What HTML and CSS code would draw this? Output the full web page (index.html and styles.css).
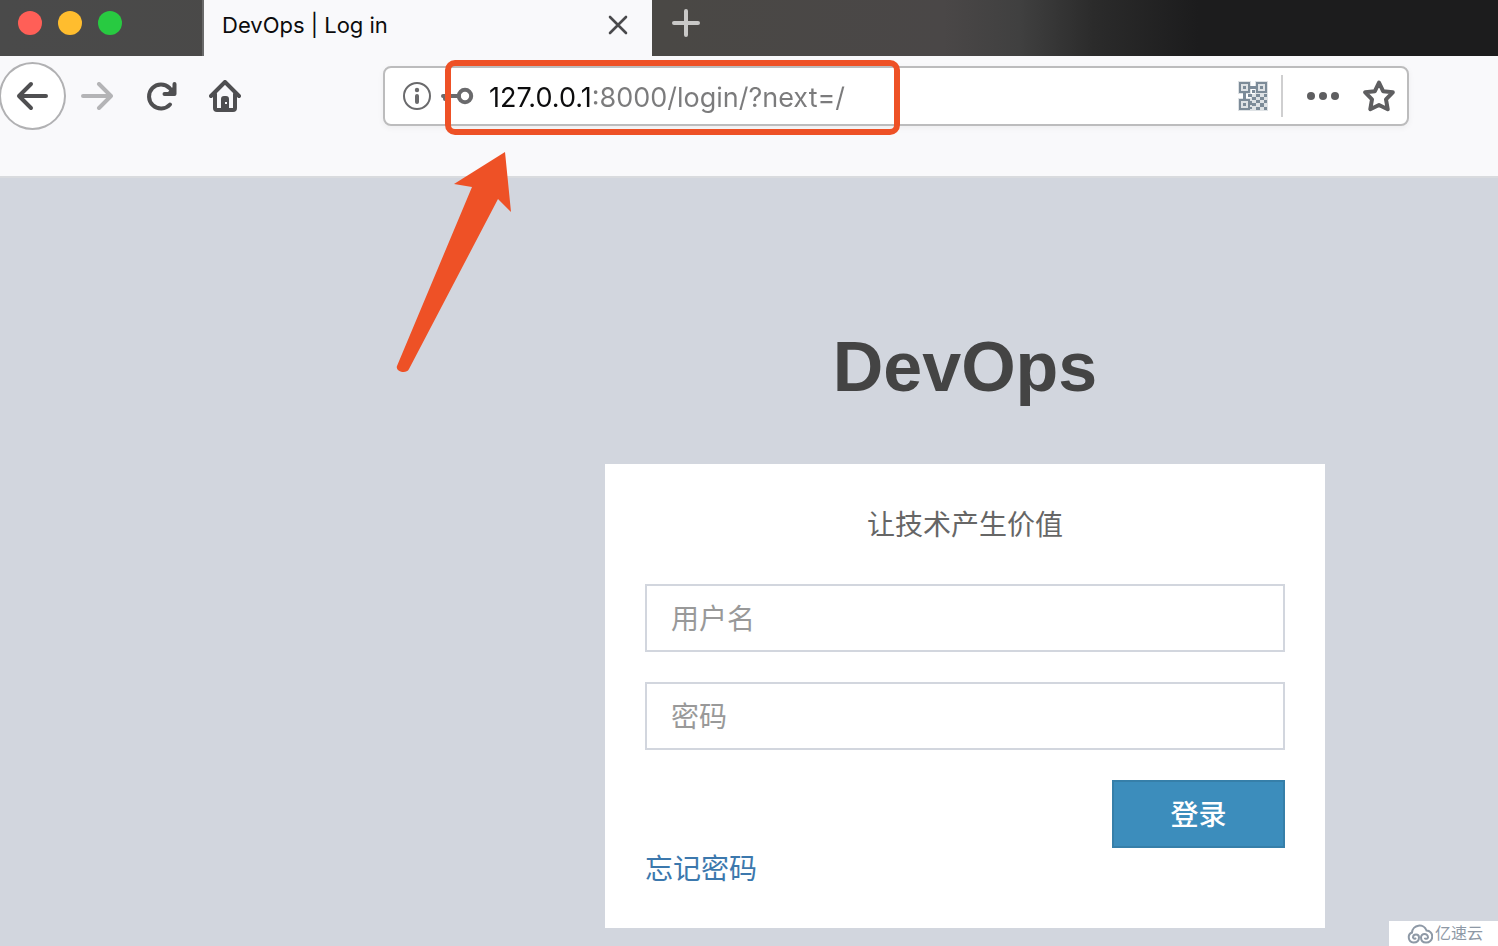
FILE: index.html
```html
<!DOCTYPE html>
<html lang="zh-CN">
<head>
<meta charset="utf-8">
<title>DevOps | Log in</title>
<link rel="stylesheet" href="styles.css">
</head>
<body>
<header class="browser">
  <div class="tabs">
    <div class="lights"><span class="light close"></span><span class="light min"></span><span class="light max"></span></div>
    <div class="tab">
      <span class="tab-title">DevOps | Log in</span>
      <button class="icon-btn" aria-label="Close tab"><svg width="22" height="22" viewBox="0 0 22 22"><path d="M3 3L19 19M19 3L3 19" stroke="#4a4a4c" stroke-width="2.6" stroke-linecap="round"/></svg></button>
    </div>
    <button class="icon-btn new-tab" aria-label="New tab"><svg width="28" height="28" viewBox="0 0 28 28"><path d="M14 2V26M2 14H26" stroke="#c9c8c7" stroke-width="4" stroke-linecap="round"/></svg></button>
  </div>
  <div class="toolbar">
    <nav class="nav">
      <button class="nav-btn back" aria-label="Back"><svg width="32" height="32" viewBox="0 0 32 32"><path d="M15 4L3 16L15 28M3 16H30" class="stroke"/></svg></button>
      <button class="nav-btn" aria-label="Forward"><svg class="faded" width="32" height="32" viewBox="0 0 32 32"><path d="M18 4L30 16L18 28M30 16H2" class="stroke"/></svg></button>
      <button class="nav-btn" aria-label="Reload"><svg width="32" height="32" viewBox="0 0 32 32"><path d="M25 24.500A12 12 0 1 1 24.500 8L28 12" class="stroke"/><path d="M29.500 4V14H19.500" class="stroke"/><path d="M21 14L30 5V14Z" fill="#4f4f51"/></svg></button>
      <button class="nav-btn" aria-label="Home"><svg width="32" height="32" viewBox="0 0 32 32"><path d="M2 16L16 2L30 16" class="stroke"/><path d="M6 14V28Q6 30 8 30H24Q26 30 26 28V14" class="stroke"/><path fill="#4f4f51" fill-rule="evenodd" d="M12 30V19Q12 16 15 16H17Q20 16 20 19V30ZM16 22V24H18V22Z"/></svg></button>
    </nav>
    <div class="urlbar">
      <svg width="28" height="28" viewBox="0 0 28 28"><circle cx="14" cy="14" r="13" fill="none" stroke="#6a6a6c" stroke-width="2"/><circle cx="14" cy="8" r="2.200" fill="#6a6a6c"/><path d="M14 14V20" stroke="#6a6a6c" stroke-width="4" stroke-linecap="round"/></svg>
      <svg class="key" width="33" height="18" viewBox="0 0 33 18"><circle cx="24" cy="9" r="6.200" fill="none" stroke="#6a6a6c" stroke-width="4"/><path d="M2 9H18M4 9V12" stroke="#6a6a6c" stroke-width="4" stroke-linecap="round"/></svg>
      <input class="url" type="text" aria-label="Address" value="127.0.0.1:8000/login/?next=/">
      <button class="icon-btn" aria-label="QR code"><svg width="30" height="30" viewBox="0 0 30 30" fill="#7c8b99"><path fill-rule="evenodd" d="M1 1H12V12H1ZM3 3V10H10V3ZM5 5H8V8H5ZM18 1H29V12H18ZM20 3V10H27V3ZM22 5H25V8H22ZM1 18H12V29H1ZM3 20V27H10V20ZM5 22H8V25H5Z"/><path d="M12 5H18V8H12ZM5 12H8V18H5ZM14 9H17V12H14ZM10 13H14V16H10ZM18 13H22V16H18ZM26 13H29V16H26ZM14 16H18V19H14ZM22 16H26V19H22ZM12 20H14V24H12ZM18 19H22V22H18ZM26 19H29V22H26ZM14 22H18V25H14ZM22 22H26V26H22ZM18 26H22V29H18ZM26 26H29V29H26ZM12 26H14V28H12Z"/><path d="M0 0H13V13H0ZM17 0H30V13H17ZM0 17H13V30H0ZM13 13H30V30H13Z" opacity="0.25"/></svg></button>
      <span class="divider"></span>
      <button class="icon-btn" aria-label="Page actions"><svg width="32" height="10" viewBox="0 0 32 10" fill="#5e5e60"><circle cx="4" cy="5" r="4"/><circle cx="16" cy="5" r="4"/><circle cx="28" cy="5" r="4"/></svg></button>
      <button class="icon-btn star" aria-label="Bookmark"><svg width="32" height="32" viewBox="0 0 32 32"><path d="M16 2.500L20.100 11.200L29.800 12.300L23 19.300L24.700 29.200L16 25L7.300 29.200L9 19.300L2.200 12.300L11.900 11.200Z" fill="none" stroke="#5e5e60" stroke-width="4" stroke-linejoin="round"/></svg></button>
    </div>
  </div>
</header>
<main class="page">
  <h1 class="logo">DevOps</h1>
  <form class="card">
    <p class="tagline">让技术产生价值</p>
    <div class="fields">
      <input class="field" type="text" placeholder="用户名" aria-label="用户名">
      <input class="field" type="password" placeholder="密码" aria-label="密码">
      <button class="submit" type="button">登录</button>
    </div>
    <a class="forgot" href="#">忘记密码</a>
  </form>
</main>
<div class="mark-box"></div>
<svg class="mark-arrow" width="120" height="226" viewBox="0 0 120 226"><path d="M109 2L58 34L76 37L1 216C-1 221 10 225 13 219L102 49L115 62Z" fill="#ee5126"/></svg>
<div class="watermark">
  <svg width="26" height="20" viewBox="0 0 26 20" fill="none" stroke="#8e99a6" stroke-width="2" stroke-linecap="round"><path d="M5 8.500A7.500 7.500 0 0 1 19.500 6.500A6 6 0 1 1 19 18.500C15 18.500 14 16 14 13.500A3.500 3.500 0 0 1 21 13.500A2 2 0 0 1 18 14.500"/><path d="M5 8.500A5.200 5.200 0 0 0 6.500 18.500C10 18.500 12 16.500 12 13.500A3 3 0 0 0 6 13.500A2 2 0 0 0 8.500 14.500"/></svg>
  <span>亿速云</span>
</div>
</body>
</html>
```
FILE: styles.css
```css
* { box-sizing: border-box; }
body {
  margin: 0;
  min-height: 100vh;
  display: flex;
  flex-direction: column;
  background: #d2d6de;
  font-family: "Liberation Sans", "Noto Sans CJK SC", sans-serif;
  overflow: hidden;
}
button, input { font: inherit; margin: 0; }
.icon-btn, .nav-btn {
  display: flex;
  align-items: center;
  justify-content: center;
  padding: 0;
  border: 0;
  background: none;
}
.browser {
  background: #f9f9fb;
  border-bottom: 2px solid #d9dbde;
  font-family: Inter, sans-serif;
}
.tabs {
  display: flex;
  height: 56px;
  background: linear-gradient(90deg, #4a4a4a 0, #4a4845 44%, #4a4747 63%, #404040 68%, #2b2b2b 73%, #1c1c1d 80%, #1c1c1d 100%);
}
.lights {
  display: flex;
  gap: 16px;
  width: 204px;
  padding: 11px 18px;
  border-right: 2px solid #6a6a6a;
}
.light { width: 24px; height: 24px; border-radius: 50%; }
.close { background: #ff5f57; }
.min { background: #ffbd2e; }
.max { background: #28ca41; }
.tab {
  display: flex;
  align-items: center;
  justify-content: space-between;
  width: 448px;
  padding: 0 23px 6px 18px;
  background: #f9f9fb;
}
.tab-title { font-size: 22px; line-height: 30px; color: #0c0c0d; }
.new-tab { width: 68px; padding-bottom: 10px; }
.toolbar { display: flex; padding: 6px 89px 46px 0; }
.nav { display: flex; flex: none; width: 384px; margin-left: -1px; }
.nav-btn { width: 64px; height: 68px; }
.back { width: 67px; padding-right: 2px; border: 2px solid #b1b1b3; border-radius: 50%; background: #fff; }
.back + .nav-btn { margin-left: -1px; }
.stroke { fill: none; stroke: #4f4f51; stroke-width: 4; stroke-linecap: round; stroke-linejoin: round; }
.faded { opacity: 0.4; }
.urlbar {
  display: flex;
  align-items: center;
  flex: 1;
  min-width: 0;
  height: 60px;
  margin-top: 4px;
  padding: 0 12px 0 18px;
  border: 2px solid #bcbcbd;
  border-radius: 8px;
  background: #fff;
  box-shadow: 0 2px 6px rgba(0, 0, 0, 0.05);
}
.key { margin: 0 15px 0 10px; }
.url {
  flex: 1;
  min-width: 0;
  height: 40px;
  padding: 2px 0 0;
  border: 0;
  outline: 0;
  font-size: 27px;
  color: #7b7b7c;
  background: linear-gradient(90deg, #0c0c0d 104px, #7b7b7c 104px);
  background-clip: text;
  -webkit-background-clip: text;
  -webkit-text-fill-color: transparent;
}
.divider { width: 2px; height: 42px; margin: 0 24px 0 13px; background: #cfcfd0; }
.star { margin-left: 24px; }
.page {
  flex: 1;
  display: flex;
  flex-direction: column;
  align-items: center;
  padding: 140px 0 18px 432px;
}
.logo { margin: 0 0 48px; font-size: 70px; line-height: 98px; color: #444; }
.card {
  width: 720px;
  padding: 42px 40px 38px;
  background: #fff;
  font-size: 28px;
  line-height: 40px;
  color: #666;
}
.tagline { margin: 0 0 38px; text-align: center; }
.fields { display: flex; flex-direction: column; gap: 30px; margin-bottom: 2px; }
.field {
  width: 100%;
  height: 68px;
  padding: 4px 24px 0;
  border: 2px solid #d2d6de;
  border-radius: 0;
  background: #fff;
  color: #555;
}
.field::placeholder { color: #999; opacity: 1; }
.submit {
  align-self: flex-end;
  width: 173px;
  height: 68px;
  padding: 4px 0 0;
  border: 2px solid #367fa9;
  background: #3c8dbc;
  color: #fff;
  font-weight: 500;
}
.forgot { color: #3c78ad; text-decoration: none; }
.mark-box {
  position: absolute;
  left: 445px;
  top: 60px;
  width: 455px;
  height: 75px;
  border: 6px solid #ee5126;
  border-radius: 10px;
  pointer-events: none;
}
.mark-arrow { position: absolute; left: 396px; top: 150px; pointer-events: none; }
.watermark {
  position: absolute;
  right: 0;
  bottom: 0;
  display: flex;
  align-items: center;
  gap: 2px;
  width: 109px;
  height: 25px;
  padding-left: 18px;
  background: #fff;
  font-size: 16px;
  line-height: 24px;
  color: #8e99a6;
}
```
